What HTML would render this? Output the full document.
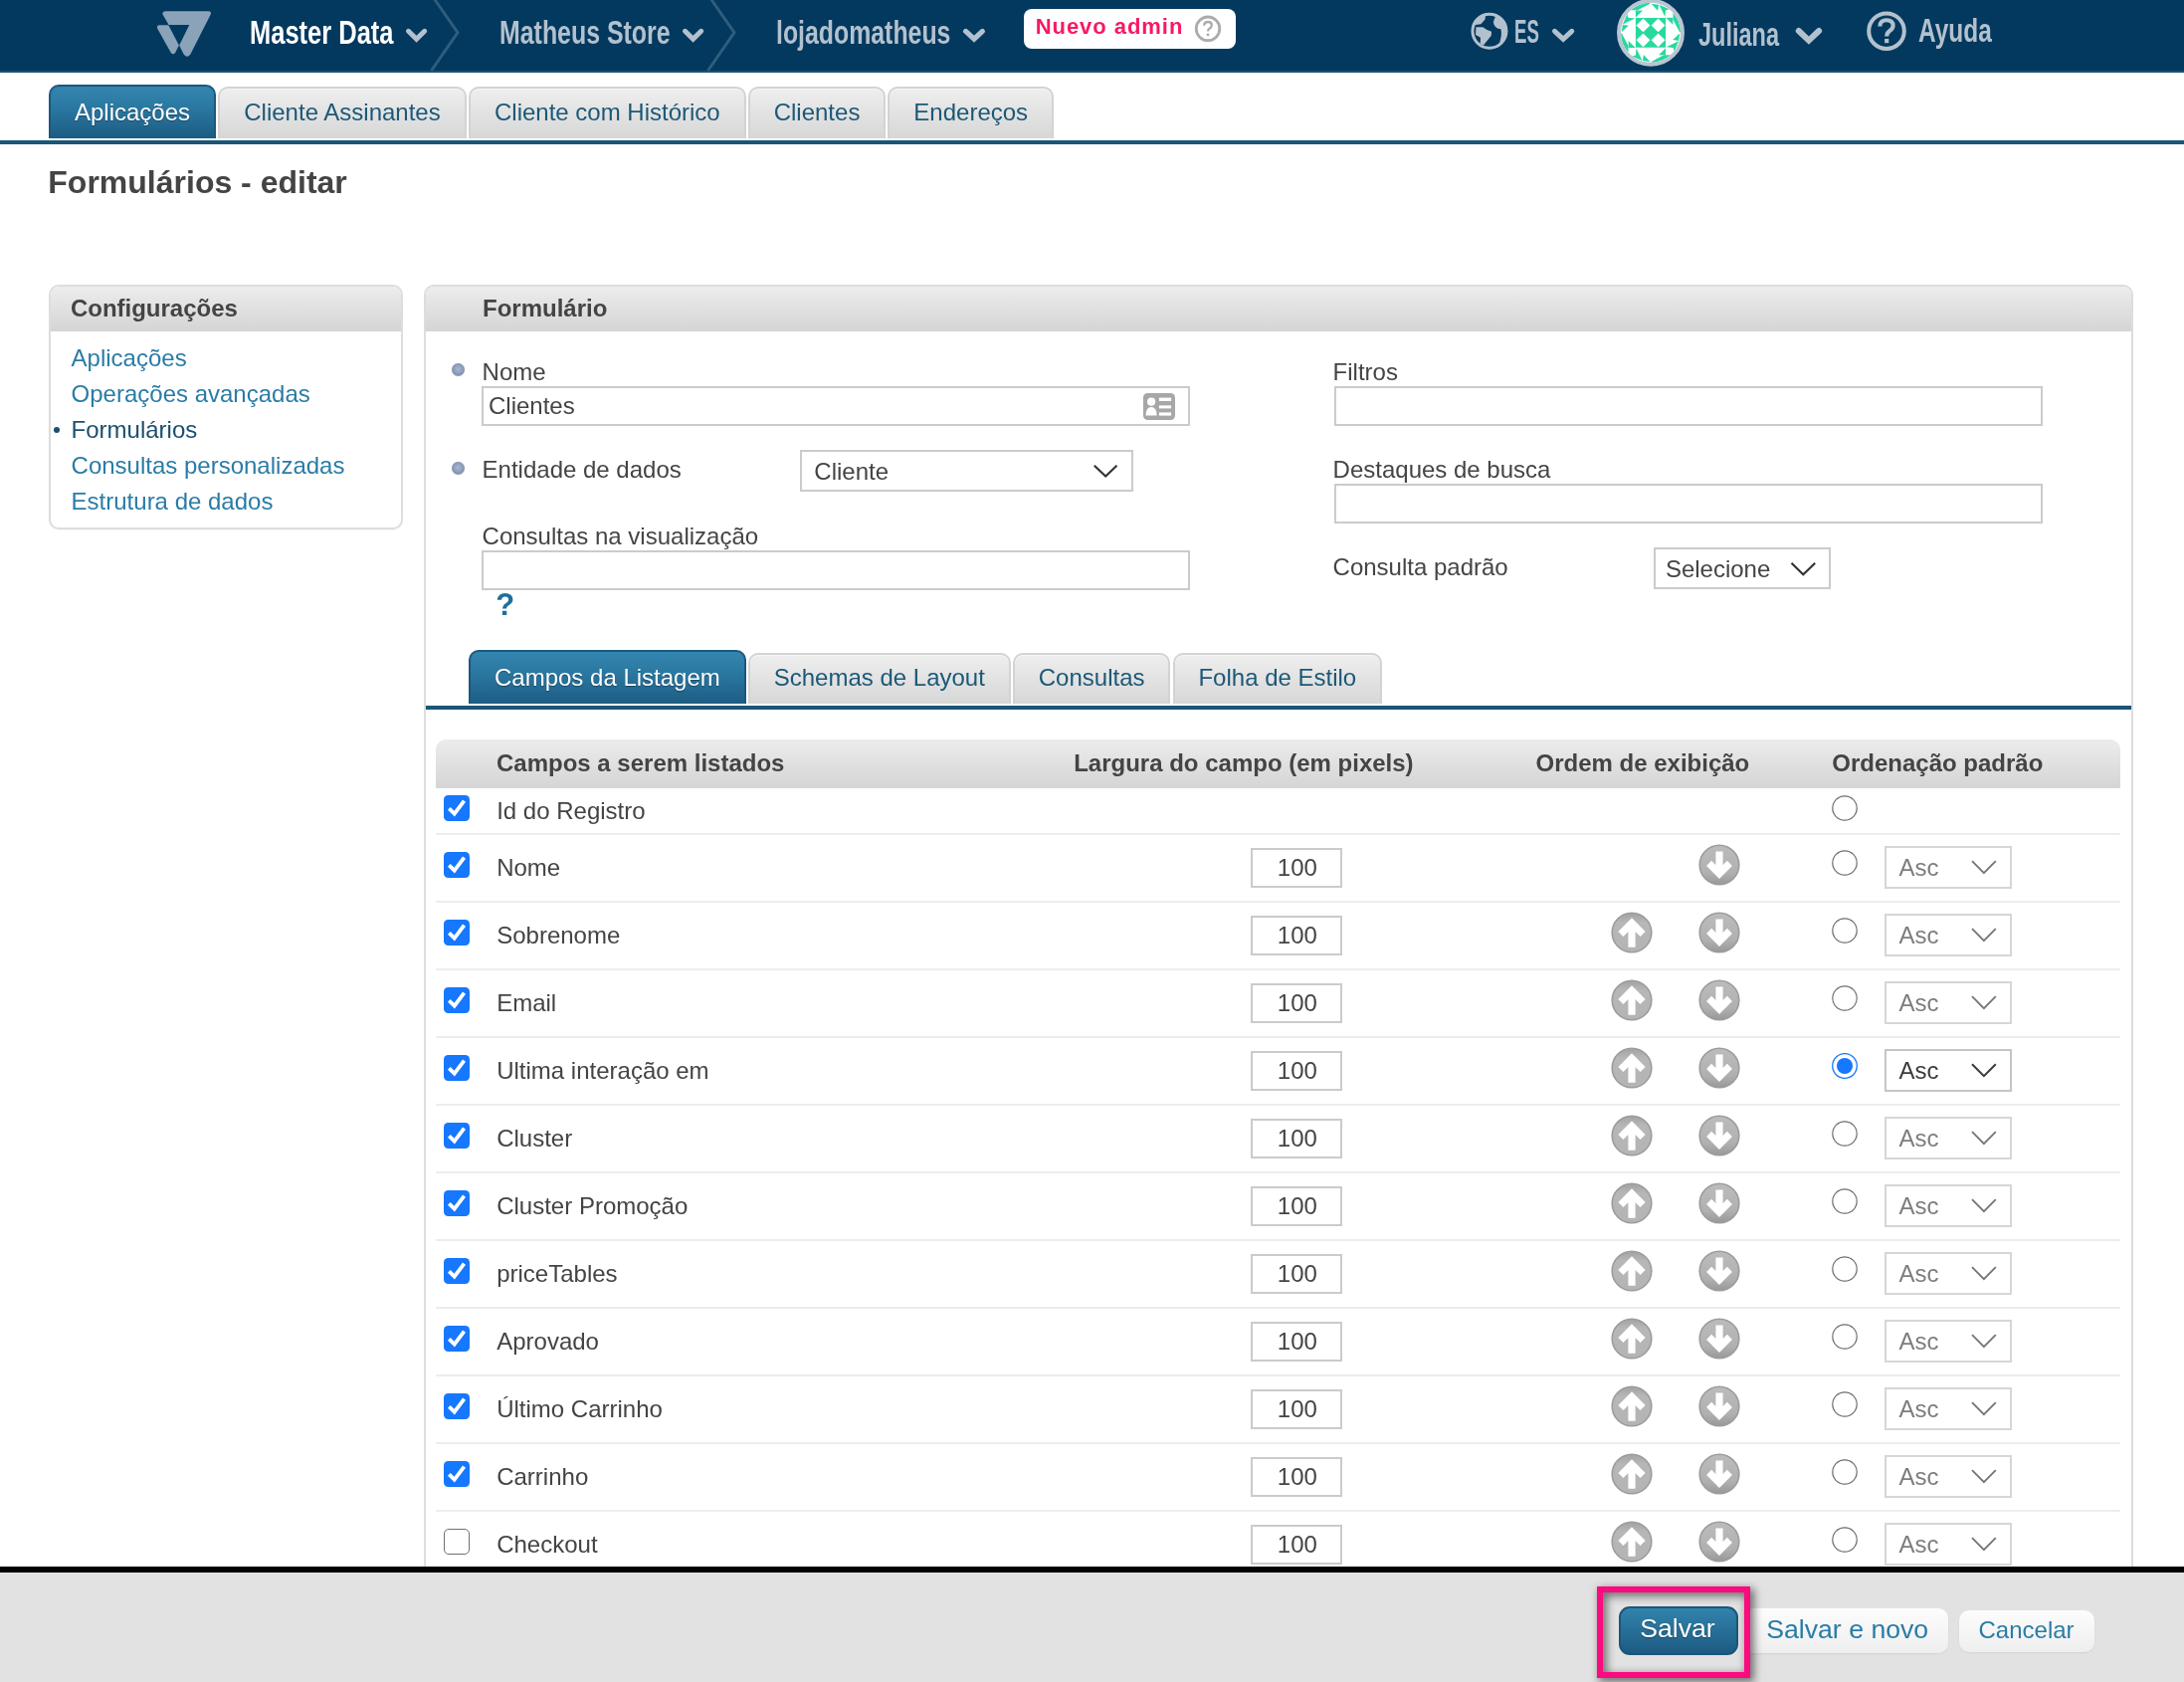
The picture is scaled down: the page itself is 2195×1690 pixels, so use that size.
<!DOCTYPE html>
<html lang="pt"><head><meta charset="utf-8"><title>Master Data</title>
<style>
html,body{margin:0;padding:0;}
body{width:2195px;height:1690px;overflow:hidden;background:#fff;position:relative;font-family:"Liberation Sans",sans-serif;}
.t{position:absolute;white-space:nowrap;}
.cond{transform-origin:0 50%;display:block;}
.tab{position:absolute;box-sizing:border-box;border-radius:10px 10px 0 0;text-align:center;font-size:24px;white-space:nowrap;}
.tab.on{background:linear-gradient(#3385af 0%,#2b7aa4 35%,#1d5c83 100%);border:2px solid #1b587e;border-bottom:none;color:#fff;text-shadow:0 1px 1px rgba(0,0,0,.35);}
.tab.off{background:linear-gradient(#eeeeee,#d7d7d7);border:2px solid #d3d3d3;border-bottom:none;color:#1c5877;box-shadow:inset 0 1px 0 #f6f6f6;}
.hd{position:absolute;box-sizing:border-box;background:linear-gradient(#ececec,#d5d5d5);}
.inp{position:absolute;box-sizing:border-box;border:2px solid #cbcbcb;background:#fff;}
.sep{position:absolute;height:2px;background:#ededed;left:438px;width:1693px;}
svg{position:absolute;overflow:visible;}
</style></head><body><div id="wrap" style="position:absolute;left:0;top:0;width:2195px;height:1690px;will-change:transform;">

<div style="position:absolute;left:0px;top:0px;width:2195px;height:73px;box-sizing:border-box;background:#03395e;border-bottom:2px solid #1d5274;"></div>
<svg style="left:0;top:0" width="2195" height="71" viewBox="0 0 2195 71"><path d="M436.5,-1 L460,32.7 L433.5,71" fill="none" stroke="#2f5d7d" stroke-width="3"/><path d="M714.5,-1 L738,32.7 L711.5,71" fill="none" stroke="#2f5d7d" stroke-width="3"/></svg>
<svg style="left:140px;top:0" width="340" height="80" viewBox="0 0 2184 514"><path fill="#8aa3b8" d="M172,72 L445,72 Q470,72 459,96 L330,350 Q313,372 296,360 Q288,352 283,343 L258,292 L323,160 L190,160 L150,92 Q148,72 172,72 Z"/><path fill="#8aa3b8" d="M130,163 L188,163 L256,293 L232,340 Q218,358 204,340 L117,185 Q110,163 130,163 Z"/></svg>
<div class="t cond" style="left:251.3px;top:12.6px;font-size:33px;line-height:40px;color:#ffffff;font-weight:bold;transform:scaleX(0.7724);">Master Data</div>
<svg style="left:0;top:0" width="2195" height="72"><path d="M410.5,31.3 L418.6,39.3 L426.7,31.3" fill="none" stroke="#b3c1ce" stroke-width="5.0" stroke-linecap="round" stroke-linejoin="miter"/></svg>
<div class="t cond" style="left:502.0px;top:12.6px;font-size:33px;line-height:40px;color:#b3c1ce;font-weight:bold;transform:scaleX(0.7547);">Matheus Store</div>
<svg style="left:0;top:0" width="2195" height="72"><path d="M688.5,31.3 L696.6,39.3 L704.7,31.3" fill="none" stroke="#b3c1ce" stroke-width="5.0" stroke-linecap="round" stroke-linejoin="miter"/></svg>
<div class="t cond" style="left:780.0px;top:12.6px;font-size:33px;line-height:40px;color:#b3c1ce;font-weight:bold;transform:scaleX(0.7532);">lojadomatheus</div>
<svg style="left:0;top:0" width="2195" height="72"><path d="M970.6,31.4 L979.0,39.1 L987.4,31.4" fill="none" stroke="#b3c1ce" stroke-width="5.2" stroke-linecap="round" stroke-linejoin="miter"/></svg>
<div style="position:absolute;left:1029px;top:9px;width:212.7px;height:40px;box-sizing:border-box;background:#fff;border-radius:8px;"></div>
<div class="t " style="left:1040.7px;top:14.4px;font-size:22px;line-height:26px;color:#f71963;font-weight:bold;letter-spacing:0.95px;">Nuevo admin</div>
<svg style="left:1199px;top:14px" width="30" height="30" viewBox="0 0 30 30"><circle cx="15" cy="14.8" r="11.8" fill="none" stroke="#acacac" stroke-width="2.8"/><path d="M11.2,11.8 Q11.2,8 15,8 Q18.8,8 18.8,11.3 Q18.8,13.2 16.8,14.4 Q15,15.5 15,17.6" fill="none" stroke="#acacac" stroke-width="2.3"/><rect x="13.8" y="19.6" width="2.4" height="2.6" fill="#acacac"/></svg>
<svg style="left:1470px;top:5px" width="60" height="55" viewBox="0 0 1835 1682"><defs><clipPath id="gc"><circle cx="824" cy="801" r="520"/></clipPath></defs><g clip-path="url(#gc)" fill="#b3c1ce"><path d="M250,200 L705,200 L700,345 L690,440 L560,590 L390,610 L250,640 Z"/><path d="M1010,300 L1000,385 Q940,480 950,560 Q975,680 1090,725 Q1150,740 1175,740 Q1215,900 1150,1110 L1120,1400 L1500,1400 L1500,200 Z"/><path d="M410,680 L620,680 Q700,750 890,820 L880,940 L640,1235 L540,1190 L550,1000 L400,920 Z"/></g><circle cx="824" cy="801" r="520" fill="none" stroke="#b3c1ce" stroke-width="92"/></svg>
<div class="t cond" style="left:1522.0px;top:12.2px;font-size:33px;line-height:40px;color:#b3c1ce;font-weight:bold;transform:scaleX(0.5633);">ES</div>
<svg style="left:0;top:0" width="2195" height="72"><path d="M1562.5,31.3 L1571.1,39.3 L1579.7,31.3" fill="none" stroke="#b3c1ce" stroke-width="5.0" stroke-linecap="round" stroke-linejoin="miter"/></svg>
<svg style="left:1615px;top:0" width="90" height="72" viewBox="0 0 2102 1682"><defs><clipPath id="ac"><circle cx="1028" cy="767" r="702"/></clipPath></defs><circle cx="1028" cy="765" r="750" fill="#fff"/><g clip-path="url(#ac)"><g fill="#27d99e"><polygon points="675,245 840,245 675,410"/><polygon points="560,242 720,242 1012,88 1012,40 560,40"/><polygon points="1040,85 1215,110 1195,250"/><polygon points="1225,110 1470,215 1380,240 1365,400"/><polygon points="1550,415 1550,580 1385,415"/><polygon points="1553,300 1553,460 1707,752 1755,752 1755,300"/><polygon points="1710,780 1685,955 1545,935"/><polygon points="1685,965 1580,1210 1555,1120 1395,1105"/><polygon points="1380,1290 1215,1290 1380,1125"/><polygon points="1495,1293 1335,1293 1043,1447 1043,1495 1495,1495"/><polygon points="1015,1450 840,1425 860,1285"/><polygon points="830,1425 585,1320 675,1295 690,1135"/><polygon points="505,1120 505,955 670,1120"/><polygon points="502,1235 502,1075 348,783 300,783 300,1235"/><polygon points="345,755 370,580 510,600"/><polygon points="370,570 475,325 500,415 660,430"/></g><rect x="675" y="420" width="705.0" height="695.0" fill="#27d99e"/><polygon fill="#fff" points="851,434 1014,594 851,754 689,594"/><polygon fill="#fff" points="851,782 1014,941 851,1101 689,941"/><polygon fill="#fff" points="1204,434 1366,594 1204,754 1042,594"/><polygon fill="#fff" points="1204,782 1366,941 1204,1101 1042,941"/></g><circle cx="1028" cy="765" r="748" fill="none" stroke="#b9c5d1" stroke-width="92"/></svg>
<div class="t cond" style="left:1707.0px;top:14.5px;font-size:33px;line-height:40px;color:#b3c1ce;font-weight:bold;transform:scaleX(0.7123);">Juliana</div>
<svg style="left:0;top:0" width="2195" height="72"><path d="M1807.8,31.0 L1817.9,40.6 L1828.1,31.0" fill="none" stroke="#b3c1ce" stroke-width="6" stroke-linecap="round" stroke-linejoin="miter"/></svg>
<svg style="left:1870px;top:6px" width="52" height="52" viewBox="0 0 52 52"><circle cx="26" cy="25.2" r="17.8" fill="none" stroke="#b3c1ce" stroke-width="4"/><path d="M19.4,20.4 Q19.4,14.2 26,14.2 Q32.6,14.2 32.6,19.8 Q32.6,22.8 29.2,24.9 Q26.2,26.8 26.2,30.6" fill="none" stroke="#b3c1ce" stroke-width="4.1"/><rect x="24.1" y="33" width="4.2" height="4.2" fill="#b3c1ce"/></svg>
<div class="t cond" style="left:1927.8px;top:10.6px;font-size:33px;line-height:40px;color:#b3c1ce;font-weight:bold;transform:scaleX(0.7407);">Ayuda</div>
<div class="tab on" style="left:49px;top:85px;width:168px;height:54px;"><div style="position:absolute;left:0;right:0;top:11.2px;line-height:29px;">Aplicações</div></div>
<div class="tab off" style="left:219px;top:87px;width:250px;height:52px;"><div style="position:absolute;left:0;right:0;top:9.2px;line-height:29px;">Cliente Assinantes</div></div>
<div class="tab off" style="left:471px;top:87px;width:278.7px;height:52px;"><div style="position:absolute;left:0;right:0;top:9.2px;line-height:29px;">Cliente com Histórico</div></div>
<div class="tab off" style="left:751.7px;top:87px;width:138.7px;height:52px;"><div style="position:absolute;left:0;right:0;top:9.2px;line-height:29px;">Clientes</div></div>
<div class="tab off" style="left:892.4px;top:87px;width:166.7px;height:52px;"><div style="position:absolute;left:0;right:0;top:9.2px;line-height:29px;">Endereços</div></div>
<div style="position:absolute;left:0px;top:141px;width:2195px;height:4px;box-sizing:border-box;background:#1b5578;"></div>
<div class="t " style="left:48.3px;top:163.9px;font-size:32px;line-height:38px;color:#444;font-weight:bold;">Formulários - editar</div>
<div style="position:absolute;left:49px;top:286px;width:356px;height:246px;box-sizing:border-box;border:2px solid #dddddd;border-radius:10px;background:#fff;box-shadow:0 1px 1px rgba(0,0,0,.04);"></div>
<div class="hd" style="left:51px;top:288px;width:352px;height:45px;border-radius:8px 8px 0 0;"></div>
<div class="t " style="left:70.9px;top:295.2px;font-size:24px;line-height:29px;color:#444;font-weight:bold;">Configurações</div>
<div class="t " style="left:71.6px;top:345.2px;font-size:24px;line-height:29px;color:#2a7ca6;font-weight:normal;">Aplicações</div>
<div class="t " style="left:71.6px;top:381.2px;font-size:24px;line-height:29px;color:#2a7ca6;font-weight:normal;">Operações avançadas</div>
<div class="t " style="left:71.6px;top:417.2px;font-size:24px;line-height:29px;color:#1b4f6e;font-weight:normal;">Formulários</div>
<div class="t " style="left:71.6px;top:453.2px;font-size:24px;line-height:29px;color:#2a7ca6;font-weight:normal;">Consultas personalizadas</div>
<div class="t " style="left:71.6px;top:489.2px;font-size:24px;line-height:29px;color:#2a7ca6;font-weight:normal;">Estrutura de dados</div>
<div style="position:absolute;left:54px;top:428.8px;width:6.4px;height:6.4px;box-sizing:border-box;background:#1b4f6e;border-radius:50%;filter:blur(0.6px);"></div>
<div style="position:absolute;left:426px;top:286px;width:1718px;height:1500px;box-sizing:border-box;border:2px solid #dddddd;border-radius:10px;background:#fff;"></div>
<div class="hd" style="left:428px;top:288px;width:1714px;height:45px;border-radius:8px 8px 0 0;"></div>
<div class="t " style="left:485.0px;top:295.2px;font-size:24px;line-height:29px;color:#444;font-weight:bold;">Formulário</div>
<div style="position:absolute;left:453.5px;top:365.0px;width:13px;height:13px;border-radius:50%;background:radial-gradient(circle at 50% 45%,#a9b6cb 0,#8e9fbb 45%,#8193b1 60%,#b9c3d3 100%);box-shadow:0 0 1px #9aa7bd;"></div>
<div class="t " style="left:484.6px;top:359.2px;font-size:24px;line-height:29px;color:#444;font-weight:normal;">Nome</div>
<div class="inp" style="left:484px;top:388px;width:712px;height:40px;"></div>
<div class="t " style="left:491.0px;top:393.0px;font-size:24px;line-height:29px;color:#444;font-weight:normal;">Clientes</div>
<svg style="left:1149px;top:394.5px" width="32" height="27" viewBox="0 0 32 27"><rect x="0" y="0" width="32" height="27" rx="4.5" fill="#a7a7a7"/><circle cx="8.1" cy="8.7" r="4.1" fill="#fff"/><path d="M2.6,22.6 Q2.6,14 8.1,14 Q13.6,14 13.6,22.6 Z" fill="#fff"/><rect x="15.9" y="4.6" width="12.2" height="3.4" fill="#fff"/><rect x="15.9" y="12.4" width="12.2" height="3" fill="#fff"/><rect x="15.9" y="19.4" width="12.2" height="3.2" fill="#fff"/></svg>
<div style="position:absolute;left:453.5px;top:463.5px;width:13px;height:13px;border-radius:50%;background:radial-gradient(circle at 50% 45%,#a9b6cb 0,#8e9fbb 45%,#8193b1 60%,#b9c3d3 100%);box-shadow:0 0 1px #9aa7bd;"></div>
<div class="t " style="left:484.6px;top:457.0px;font-size:24px;line-height:29px;color:#444;font-weight:normal;">Entidade de dados</div>
<div class="inp" style="left:803.6px;top:451.8px;width:335px;height:42.7px;border-color:#cbcbcb;"></div>
<div class="t " style="left:818.3px;top:458.5px;font-size:24px;line-height:29px;color:#444;font-weight:normal;">Cliente</div>
<svg style="left:0;top:0" width="10" height="10"><path d="M1099.8,467.8 L1111.2,478.5 L1122.5,467.8" fill="none" stroke="#333" stroke-width="2.2"/></svg>
<div class="t " style="left:484.6px;top:524.2px;font-size:24px;line-height:29px;color:#444;font-weight:normal;">Consultas na visualização</div>
<div class="inp" style="left:484px;top:552.8px;width:712px;height:39.8px;"></div>
<div class="t " style="left:498.2px;top:589.3px;font-size:31px;line-height:37px;color:#1f6f9e;font-weight:bold;">?</div>
<div class="t " style="left:1339.6px;top:358.8px;font-size:24px;line-height:29px;color:#444;font-weight:normal;">Filtros</div>
<div class="inp" style="left:1341px;top:388px;width:711.5px;height:39.5px;"></div>
<div class="t " style="left:1339.6px;top:457.2px;font-size:24px;line-height:29px;color:#444;font-weight:normal;">Destaques de busca</div>
<div class="inp" style="left:1341px;top:486.4px;width:711.5px;height:39.6px;"></div>
<div class="t " style="left:1339.6px;top:554.7px;font-size:24px;line-height:29px;color:#444;font-weight:normal;">Consulta padrão</div>
<div class="inp" style="left:1661.5px;top:550.3px;width:178px;height:42px;border-color:#cbcbcb;"></div>
<div class="t " style="left:1673.9px;top:556.8px;font-size:24px;line-height:29px;color:#444;font-weight:normal;">Selecione</div>
<svg style="left:0;top:0" width="10" height="10"><path d="M1800.5,565.8 L1812.3,577.3 L1824.2,565.8" fill="none" stroke="#333" stroke-width="2.2"/></svg>
<div class="tab on" style="left:471px;top:653px;width:278.8px;height:54px;"><div style="position:absolute;left:0;right:0;top:10.7px;line-height:29px;">Campos da Listagem</div></div>
<div class="tab off" style="left:751.8px;top:655.5px;width:264px;height:51.5px;"><div style="position:absolute;left:0;right:0;top:8.2px;line-height:29px;">Schemas de Layout</div></div>
<div class="tab off" style="left:1017.8px;top:655.5px;width:158.7px;height:51.5px;"><div style="position:absolute;left:0;right:0;top:8.2px;line-height:29px;">Consultas</div></div>
<div class="tab off" style="left:1178.5px;top:655.5px;width:210.7px;height:51.5px;"><div style="position:absolute;left:0;right:0;top:8.2px;line-height:29px;">Folha de Estilo</div></div>
<div style="position:absolute;left:428px;top:709px;width:1714px;height:4px;box-sizing:border-box;background:#1b5578;"></div>
<div class="hd" style="left:438px;top:743px;width:1693px;height:49.3px;border-radius:10px 10px 0 0;"></div>
<div class="t " style="left:499.0px;top:752.2px;font-size:24px;line-height:29px;color:#444;font-weight:bold;">Campos a serem listados</div>
<div class="t " style="left:1079.2px;top:752.2px;font-size:24px;line-height:29px;color:#444;font-weight:bold;">Largura do campo (em pixels)</div>
<div class="t " style="left:1543.5px;top:752.2px;font-size:24px;line-height:29px;color:#444;font-weight:bold;">Ordem de exibição</div>
<div class="t " style="left:1841.3px;top:752.2px;font-size:24px;line-height:29px;color:#444;font-weight:bold;">Ordenação padrão</div>
<svg width="0" height="0" style="left:0;top:0"><defs>
<filter id="bl" x="-20%" y="-20%" width="140%" height="140%"><feGaussianBlur stdDeviation="0.7"/></filter>
<linearGradient id="gu" x1="0" y1="0" x2="0" y2="1"><stop offset="0" stop-color="#a2a2a2"/><stop offset="0.25" stop-color="#b7b7b7"/><stop offset="1" stop-color="#b4b4b4"/></linearGradient>
<linearGradient id="gd" x1="0" y1="0" x2="0" y2="1"><stop offset="0" stop-color="#bcbcbc"/><stop offset="0.7" stop-color="#b0b0b0"/><stop offset="1" stop-color="#989898"/></linearGradient>
<g id="aup" filter="url(#bl)"><circle cx="22" cy="22" r="19.8" fill="url(#gu)" stroke="#9c9c9c" stroke-width="1.6"/><path d="M22,36.8 L22,14 M10.9,23.5 L22,12.4 L33.1,23.5" fill="none" stroke="#fff" stroke-width="7.2" stroke-linejoin="miter"/></g>
<g id="adn" filter="url(#bl)"><circle cx="22" cy="22" r="19.8" fill="url(#gd)" stroke="#9c9c9c" stroke-width="1.6"/><path d="M22,8.4 L22,29 M11.6,20.4 L22,30.8 L32.4,20.4" fill="none" stroke="#fff" stroke-width="7.2" stroke-linejoin="miter"/></g>
</defs></svg>
<svg style="left:446px;top:799px" width="26" height="26" viewBox="0 0 26 26"><rect width="26" height="26" rx="4.5" fill="#1677ff"/><path d="M5.3,13.3 L10.7,18.7 L20.5,5.7" fill="none" stroke="#fff" stroke-width="3.8" stroke-linecap="butt" stroke-linejoin="miter"/></svg>
<div class="t " style="left:499.2px;top:800.4px;font-size:24px;line-height:29px;color:#444;font-weight:normal;">Id do Registro</div>
<svg style="left:1841px;top:798.7px" width="26" height="26"><circle cx="13" cy="13" r="12.2" fill="#fff" stroke="#6e6e6e" stroke-width="1.2"/></svg>
<div class="sep" style="top:837px;"></div>
<svg style="left:446px;top:856px" width="26" height="26" viewBox="0 0 26 26"><rect width="26" height="26" rx="4.5" fill="#1677ff"/><path d="M5.3,13.3 L10.7,18.7 L20.5,5.7" fill="none" stroke="#fff" stroke-width="3.8" stroke-linecap="butt" stroke-linejoin="miter"/></svg>
<div class="t " style="left:499.2px;top:856.5px;font-size:24px;line-height:29px;color:#444;font-weight:normal;">Nome</div>
<div class="inp" style="left:1257.3px;top:852.4px;width:92.2px;height:39.2px;"></div>
<div class="t " style="left:1283.8px;top:856.7px;font-size:24px;line-height:29px;color:#444;font-weight:normal;">100</div>
<svg style="left:1706.0px;top:846.7px" width="44" height="44"><use href="#adn"/></svg>
<svg style="left:1841px;top:854.2px" width="26" height="26"><circle cx="13" cy="13" r="12.2" fill="#fff" stroke="#6e6e6e" stroke-width="1.2"/></svg>
<div class="inp" style="left:1894.4px;top:850.3px;width:128px;height:42.4px;border-color:#d6d6d6;"></div>
<div class="t " style="left:1908.6px;top:856.6px;font-size:24px;line-height:29px;color:#7d7d7d;font-weight:normal;">Asc</div>
<svg style="left:0;top:0" width="10" height="10"><path d="M1982.0,865.2 L1993.9,877.1 L2005.8,865.2" fill="none" stroke="#777" stroke-width="1.9"/></svg>
<div class="sep" style="top:905px;"></div>
<svg style="left:446px;top:924px" width="26" height="26" viewBox="0 0 26 26"><rect width="26" height="26" rx="4.5" fill="#1677ff"/><path d="M5.3,13.3 L10.7,18.7 L20.5,5.7" fill="none" stroke="#fff" stroke-width="3.8" stroke-linecap="butt" stroke-linejoin="miter"/></svg>
<div class="t " style="left:499.2px;top:924.5px;font-size:24px;line-height:29px;color:#444;font-weight:normal;">Sobrenome</div>
<div class="inp" style="left:1257.3px;top:920.4px;width:92.2px;height:39.2px;"></div>
<div class="t " style="left:1283.8px;top:924.7px;font-size:24px;line-height:29px;color:#444;font-weight:normal;">100</div>
<svg style="left:1617.7px;top:914.7px" width="44" height="44"><use href="#aup"/></svg>
<svg style="left:1706.0px;top:914.7px" width="44" height="44"><use href="#adn"/></svg>
<svg style="left:1841px;top:922.2px" width="26" height="26"><circle cx="13" cy="13" r="12.2" fill="#fff" stroke="#6e6e6e" stroke-width="1.2"/></svg>
<div class="inp" style="left:1894.4px;top:918.3px;width:128px;height:42.4px;border-color:#d6d6d6;"></div>
<div class="t " style="left:1908.6px;top:924.6px;font-size:24px;line-height:29px;color:#7d7d7d;font-weight:normal;">Asc</div>
<svg style="left:0;top:0" width="10" height="10"><path d="M1982.0,933.2 L1993.9,945.1 L2005.8,933.2" fill="none" stroke="#777" stroke-width="1.9"/></svg>
<div class="sep" style="top:973px;"></div>
<svg style="left:446px;top:992px" width="26" height="26" viewBox="0 0 26 26"><rect width="26" height="26" rx="4.5" fill="#1677ff"/><path d="M5.3,13.3 L10.7,18.7 L20.5,5.7" fill="none" stroke="#fff" stroke-width="3.8" stroke-linecap="butt" stroke-linejoin="miter"/></svg>
<div class="t " style="left:499.2px;top:992.5px;font-size:24px;line-height:29px;color:#444;font-weight:normal;">Email</div>
<div class="inp" style="left:1257.3px;top:988.4px;width:92.2px;height:39.2px;"></div>
<div class="t " style="left:1283.8px;top:992.7px;font-size:24px;line-height:29px;color:#444;font-weight:normal;">100</div>
<svg style="left:1617.7px;top:982.7px" width="44" height="44"><use href="#aup"/></svg>
<svg style="left:1706.0px;top:982.7px" width="44" height="44"><use href="#adn"/></svg>
<svg style="left:1841px;top:990.2px" width="26" height="26"><circle cx="13" cy="13" r="12.2" fill="#fff" stroke="#6e6e6e" stroke-width="1.2"/></svg>
<div class="inp" style="left:1894.4px;top:986.3px;width:128px;height:42.4px;border-color:#d6d6d6;"></div>
<div class="t " style="left:1908.6px;top:992.6px;font-size:24px;line-height:29px;color:#7d7d7d;font-weight:normal;">Asc</div>
<svg style="left:0;top:0" width="10" height="10"><path d="M1982.0,1001.2 L1993.9,1013.1 L2005.8,1001.2" fill="none" stroke="#777" stroke-width="1.9"/></svg>
<div class="sep" style="top:1041px;"></div>
<svg style="left:446px;top:1060px" width="26" height="26" viewBox="0 0 26 26"><rect width="26" height="26" rx="4.5" fill="#1677ff"/><path d="M5.3,13.3 L10.7,18.7 L20.5,5.7" fill="none" stroke="#fff" stroke-width="3.8" stroke-linecap="butt" stroke-linejoin="miter"/></svg>
<div class="t " style="left:499.2px;top:1060.5px;font-size:24px;line-height:29px;color:#444;font-weight:normal;">Ultima interação em</div>
<div class="inp" style="left:1257.3px;top:1056.4px;width:92.2px;height:39.2px;"></div>
<div class="t " style="left:1283.8px;top:1060.7px;font-size:24px;line-height:29px;color:#444;font-weight:normal;">100</div>
<svg style="left:1617.7px;top:1050.7px" width="44" height="44"><use href="#aup"/></svg>
<svg style="left:1706.0px;top:1050.7px" width="44" height="44"><use href="#adn"/></svg>
<svg style="left:1841px;top:1058.2px" width="26" height="26"><circle cx="13" cy="13" r="12.3" fill="#fff" stroke="#1677ff" stroke-width="1.3"/><circle cx="13" cy="13" r="8" fill="#1677ff"/></svg>
<div class="inp" style="left:1894.4px;top:1054.3px;width:128px;height:42.4px;border-color:#c6c6c6;"></div>
<div class="t " style="left:1908.6px;top:1060.6px;font-size:24px;line-height:29px;color:#3c3c3c;font-weight:normal;">Asc</div>
<svg style="left:0;top:0" width="10" height="10"><path d="M1982.0,1069.2 L1993.9,1081.1 L2005.8,1069.2" fill="none" stroke="#3a3a3a" stroke-width="2.0"/></svg>
<div class="sep" style="top:1109px;"></div>
<svg style="left:446px;top:1128px" width="26" height="26" viewBox="0 0 26 26"><rect width="26" height="26" rx="4.5" fill="#1677ff"/><path d="M5.3,13.3 L10.7,18.7 L20.5,5.7" fill="none" stroke="#fff" stroke-width="3.8" stroke-linecap="butt" stroke-linejoin="miter"/></svg>
<div class="t " style="left:499.2px;top:1128.5px;font-size:24px;line-height:29px;color:#444;font-weight:normal;">Cluster</div>
<div class="inp" style="left:1257.3px;top:1124.4px;width:92.2px;height:39.2px;"></div>
<div class="t " style="left:1283.8px;top:1128.7px;font-size:24px;line-height:29px;color:#444;font-weight:normal;">100</div>
<svg style="left:1617.7px;top:1118.7px" width="44" height="44"><use href="#aup"/></svg>
<svg style="left:1706.0px;top:1118.7px" width="44" height="44"><use href="#adn"/></svg>
<svg style="left:1841px;top:1126.2px" width="26" height="26"><circle cx="13" cy="13" r="12.2" fill="#fff" stroke="#6e6e6e" stroke-width="1.2"/></svg>
<div class="inp" style="left:1894.4px;top:1122.3px;width:128px;height:42.4px;border-color:#d6d6d6;"></div>
<div class="t " style="left:1908.6px;top:1128.6px;font-size:24px;line-height:29px;color:#7d7d7d;font-weight:normal;">Asc</div>
<svg style="left:0;top:0" width="10" height="10"><path d="M1982.0,1137.2 L1993.9,1149.1 L2005.8,1137.2" fill="none" stroke="#777" stroke-width="1.9"/></svg>
<div class="sep" style="top:1177px;"></div>
<svg style="left:446px;top:1196px" width="26" height="26" viewBox="0 0 26 26"><rect width="26" height="26" rx="4.5" fill="#1677ff"/><path d="M5.3,13.3 L10.7,18.7 L20.5,5.7" fill="none" stroke="#fff" stroke-width="3.8" stroke-linecap="butt" stroke-linejoin="miter"/></svg>
<div class="t " style="left:499.2px;top:1196.5px;font-size:24px;line-height:29px;color:#444;font-weight:normal;">Cluster Promoção</div>
<div class="inp" style="left:1257.3px;top:1192.4px;width:92.2px;height:39.2px;"></div>
<div class="t " style="left:1283.8px;top:1196.7px;font-size:24px;line-height:29px;color:#444;font-weight:normal;">100</div>
<svg style="left:1617.7px;top:1186.7px" width="44" height="44"><use href="#aup"/></svg>
<svg style="left:1706.0px;top:1186.7px" width="44" height="44"><use href="#adn"/></svg>
<svg style="left:1841px;top:1194.2px" width="26" height="26"><circle cx="13" cy="13" r="12.2" fill="#fff" stroke="#6e6e6e" stroke-width="1.2"/></svg>
<div class="inp" style="left:1894.4px;top:1190.3px;width:128px;height:42.4px;border-color:#d6d6d6;"></div>
<div class="t " style="left:1908.6px;top:1196.6px;font-size:24px;line-height:29px;color:#7d7d7d;font-weight:normal;">Asc</div>
<svg style="left:0;top:0" width="10" height="10"><path d="M1982.0,1205.2 L1993.9,1217.1 L2005.8,1205.2" fill="none" stroke="#777" stroke-width="1.9"/></svg>
<div class="sep" style="top:1245px;"></div>
<svg style="left:446px;top:1264px" width="26" height="26" viewBox="0 0 26 26"><rect width="26" height="26" rx="4.5" fill="#1677ff"/><path d="M5.3,13.3 L10.7,18.7 L20.5,5.7" fill="none" stroke="#fff" stroke-width="3.8" stroke-linecap="butt" stroke-linejoin="miter"/></svg>
<div class="t " style="left:499.2px;top:1264.5px;font-size:24px;line-height:29px;color:#444;font-weight:normal;">priceTables</div>
<div class="inp" style="left:1257.3px;top:1260.4px;width:92.2px;height:39.2px;"></div>
<div class="t " style="left:1283.8px;top:1264.7px;font-size:24px;line-height:29px;color:#444;font-weight:normal;">100</div>
<svg style="left:1617.7px;top:1254.7px" width="44" height="44"><use href="#aup"/></svg>
<svg style="left:1706.0px;top:1254.7px" width="44" height="44"><use href="#adn"/></svg>
<svg style="left:1841px;top:1262.2px" width="26" height="26"><circle cx="13" cy="13" r="12.2" fill="#fff" stroke="#6e6e6e" stroke-width="1.2"/></svg>
<div class="inp" style="left:1894.4px;top:1258.3px;width:128px;height:42.4px;border-color:#d6d6d6;"></div>
<div class="t " style="left:1908.6px;top:1264.6px;font-size:24px;line-height:29px;color:#7d7d7d;font-weight:normal;">Asc</div>
<svg style="left:0;top:0" width="10" height="10"><path d="M1982.0,1273.2 L1993.9,1285.1 L2005.8,1273.2" fill="none" stroke="#777" stroke-width="1.9"/></svg>
<div class="sep" style="top:1313px;"></div>
<svg style="left:446px;top:1332px" width="26" height="26" viewBox="0 0 26 26"><rect width="26" height="26" rx="4.5" fill="#1677ff"/><path d="M5.3,13.3 L10.7,18.7 L20.5,5.7" fill="none" stroke="#fff" stroke-width="3.8" stroke-linecap="butt" stroke-linejoin="miter"/></svg>
<div class="t " style="left:499.2px;top:1332.5px;font-size:24px;line-height:29px;color:#444;font-weight:normal;">Aprovado</div>
<div class="inp" style="left:1257.3px;top:1328.4px;width:92.2px;height:39.2px;"></div>
<div class="t " style="left:1283.8px;top:1332.7px;font-size:24px;line-height:29px;color:#444;font-weight:normal;">100</div>
<svg style="left:1617.7px;top:1322.7px" width="44" height="44"><use href="#aup"/></svg>
<svg style="left:1706.0px;top:1322.7px" width="44" height="44"><use href="#adn"/></svg>
<svg style="left:1841px;top:1330.2px" width="26" height="26"><circle cx="13" cy="13" r="12.2" fill="#fff" stroke="#6e6e6e" stroke-width="1.2"/></svg>
<div class="inp" style="left:1894.4px;top:1326.3px;width:128px;height:42.4px;border-color:#d6d6d6;"></div>
<div class="t " style="left:1908.6px;top:1332.6px;font-size:24px;line-height:29px;color:#7d7d7d;font-weight:normal;">Asc</div>
<svg style="left:0;top:0" width="10" height="10"><path d="M1982.0,1341.2 L1993.9,1353.1 L2005.8,1341.2" fill="none" stroke="#777" stroke-width="1.9"/></svg>
<div class="sep" style="top:1381px;"></div>
<svg style="left:446px;top:1400px" width="26" height="26" viewBox="0 0 26 26"><rect width="26" height="26" rx="4.5" fill="#1677ff"/><path d="M5.3,13.3 L10.7,18.7 L20.5,5.7" fill="none" stroke="#fff" stroke-width="3.8" stroke-linecap="butt" stroke-linejoin="miter"/></svg>
<div class="t " style="left:499.2px;top:1400.5px;font-size:24px;line-height:29px;color:#444;font-weight:normal;">Último Carrinho</div>
<div class="inp" style="left:1257.3px;top:1396.4px;width:92.2px;height:39.2px;"></div>
<div class="t " style="left:1283.8px;top:1400.7px;font-size:24px;line-height:29px;color:#444;font-weight:normal;">100</div>
<svg style="left:1617.7px;top:1390.7px" width="44" height="44"><use href="#aup"/></svg>
<svg style="left:1706.0px;top:1390.7px" width="44" height="44"><use href="#adn"/></svg>
<svg style="left:1841px;top:1398.2px" width="26" height="26"><circle cx="13" cy="13" r="12.2" fill="#fff" stroke="#6e6e6e" stroke-width="1.2"/></svg>
<div class="inp" style="left:1894.4px;top:1394.3px;width:128px;height:42.4px;border-color:#d6d6d6;"></div>
<div class="t " style="left:1908.6px;top:1400.6px;font-size:24px;line-height:29px;color:#7d7d7d;font-weight:normal;">Asc</div>
<svg style="left:0;top:0" width="10" height="10"><path d="M1982.0,1409.2 L1993.9,1421.1 L2005.8,1409.2" fill="none" stroke="#777" stroke-width="1.9"/></svg>
<div class="sep" style="top:1449px;"></div>
<svg style="left:446px;top:1468px" width="26" height="26" viewBox="0 0 26 26"><rect width="26" height="26" rx="4.5" fill="#1677ff"/><path d="M5.3,13.3 L10.7,18.7 L20.5,5.7" fill="none" stroke="#fff" stroke-width="3.8" stroke-linecap="butt" stroke-linejoin="miter"/></svg>
<div class="t " style="left:499.2px;top:1468.5px;font-size:24px;line-height:29px;color:#444;font-weight:normal;">Carrinho</div>
<div class="inp" style="left:1257.3px;top:1464.4px;width:92.2px;height:39.2px;"></div>
<div class="t " style="left:1283.8px;top:1468.7px;font-size:24px;line-height:29px;color:#444;font-weight:normal;">100</div>
<svg style="left:1617.7px;top:1458.7px" width="44" height="44"><use href="#aup"/></svg>
<svg style="left:1706.0px;top:1458.7px" width="44" height="44"><use href="#adn"/></svg>
<svg style="left:1841px;top:1466.2px" width="26" height="26"><circle cx="13" cy="13" r="12.2" fill="#fff" stroke="#6e6e6e" stroke-width="1.2"/></svg>
<div class="inp" style="left:1894.4px;top:1462.3px;width:128px;height:42.4px;border-color:#d6d6d6;"></div>
<div class="t " style="left:1908.6px;top:1468.6px;font-size:24px;line-height:29px;color:#7d7d7d;font-weight:normal;">Asc</div>
<svg style="left:0;top:0" width="10" height="10"><path d="M1982.0,1477.2 L1993.9,1489.1 L2005.8,1477.2" fill="none" stroke="#777" stroke-width="1.9"/></svg>
<div class="sep" style="top:1517px;"></div>
<div style="position:absolute;left:446px;top:1536px;width:26px;height:26px;box-sizing:border-box;border:1.6px solid #707070;border-radius:5px;background:#fff;"></div>
<div class="t " style="left:499.2px;top:1536.5px;font-size:24px;line-height:29px;color:#444;font-weight:normal;">Checkout</div>
<div class="inp" style="left:1257.3px;top:1532.4px;width:92.2px;height:39.2px;"></div>
<div class="t " style="left:1283.8px;top:1536.7px;font-size:24px;line-height:29px;color:#444;font-weight:normal;">100</div>
<svg style="left:1617.7px;top:1526.7px" width="44" height="44"><use href="#aup"/></svg>
<svg style="left:1706.0px;top:1526.7px" width="44" height="44"><use href="#adn"/></svg>
<svg style="left:1841px;top:1534.2px" width="26" height="26"><circle cx="13" cy="13" r="12.2" fill="#fff" stroke="#6e6e6e" stroke-width="1.2"/></svg>
<div class="inp" style="left:1894.4px;top:1530.3px;width:128px;height:42.4px;border-color:#d6d6d6;"></div>
<div class="t " style="left:1908.6px;top:1536.6px;font-size:24px;line-height:29px;color:#7d7d7d;font-weight:normal;">Asc</div>
<svg style="left:0;top:0" width="10" height="10"><path d="M1982.0,1545.2 L1993.9,1557.1 L2005.8,1545.2" fill="none" stroke="#777" stroke-width="1.9"/></svg>
<div style="position:absolute;left:0px;top:1574px;width:2195px;height:116px;box-sizing:border-box;background:#e2e2e2;border-top:6px solid #000;"></div>
<div style="position:absolute;left:1752px;top:1616px;width:206px;height:45px;box-sizing:border-box;background:linear-gradient(#fdfdfd,#eeeeee);border-radius:10px;box-shadow:0 1px 2px rgba(0,0,0,.07);"></div>
<div class="t " style="left:1775.2px;top:1620.5px;font-size:26.67px;line-height:32px;color:#2a7ca6;font-weight:normal;">Salvar e novo</div>
<div style="position:absolute;left:1969px;top:1617.5px;width:136px;height:42.5px;box-sizing:border-box;background:linear-gradient(#fdfdfd,#eeeeee);border-radius:10px;box-shadow:0 1px 2px rgba(0,0,0,.07);"></div>
<div class="t " style="left:1988.5px;top:1623.0px;font-size:24px;line-height:29px;color:#2a7ca6;font-weight:normal;">Cancelar</div>
<div style="position:absolute;left:1605px;top:1594px;width:153.5px;height:91.6px;box-sizing:border-box;border:6px solid #fb0a80;box-shadow:3px 3px 8px 1px rgba(0,0,0,.5), inset 3px 3px 8px 1px rgba(0,0,0,.5);background:#e2e2e2;"></div>
<div style="position:absolute;left:1627px;top:1614px;width:120px;height:49px;box-sizing:border-box;background:linear-gradient(#3183ad,#1d5b82);border:2px solid #1b5679;border-radius:11px;"></div>
<div class="t " style="left:1648.2px;top:1620.2px;font-size:26.67px;line-height:32px;color:#fff;font-weight:normal;text-shadow:0 1px 1px rgba(0,0,0,.4);">Salvar</div>
</div></body></html>
